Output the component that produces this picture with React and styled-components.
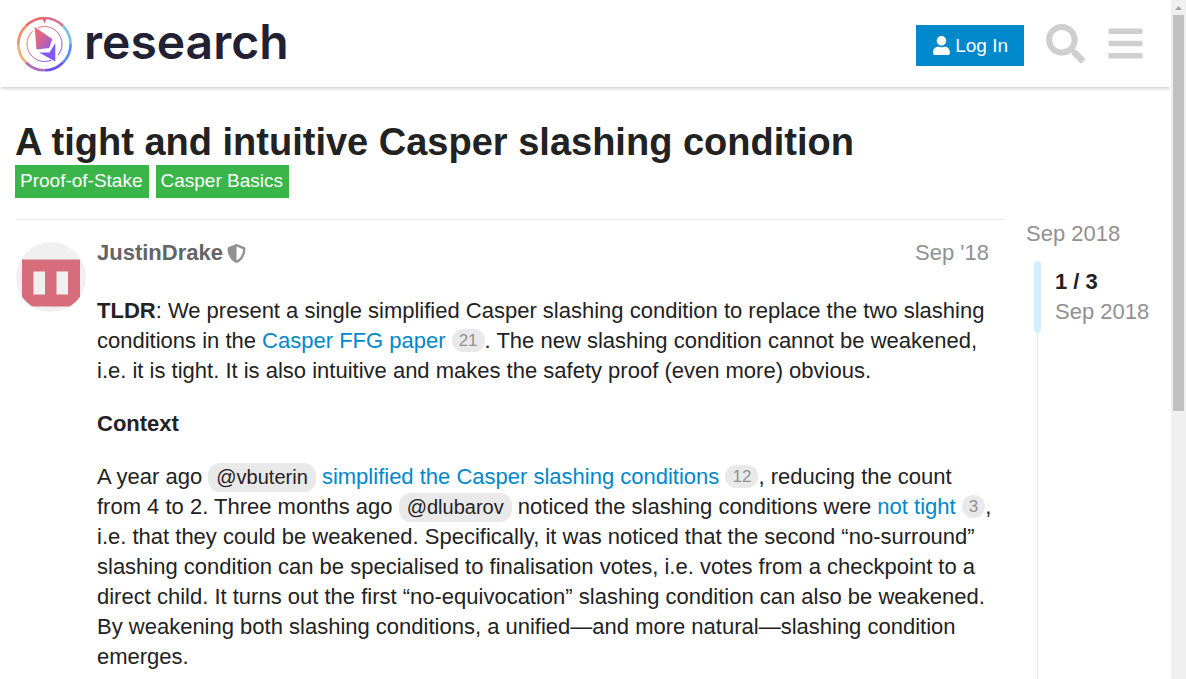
import React from "react";
import styled, { createGlobalStyle } from "styled-components";
import { FaUser, FaSearch, FaBars, FaShieldAlt } from "react-icons/fa";

const GlobalStyle = createGlobalStyle`
  *, *::before, *::after { box-sizing: border-box; }
  body {
    margin: 0;
    background: #fff;
    color: #222;
    font-family: "Liberation Sans", Arial, sans-serif;
    font-size: 22px;
    line-height: 30px;
  }
  a { color: #0088cc; text-decoration: none; }
  button { font-family: inherit; border: 0; cursor: pointer; }
`;

const Frame = styled.div`
  display: grid;
  grid-template-columns: minmax(0, 1fr) 15px;
  height: 100vh;
  overflow: hidden;
`;

const Page = styled.div`
  overflow: hidden;
  display: flex;
  flex-direction: column;
`;

const Track = styled.div`
  display: flex;
  flex-direction: column;
  align-items: center;
  background: #f0f0f0;
`;

const TrackArrow = styled.svg`
  flex: none;
  width: 15px;
  height: 15px;
  fill: #a3a3a3;
`;

const Thumb = styled.div`
  width: 11px;
  height: 396px;
  background: #c0c0c0;
`;

const Header = styled.header`
  flex: none;
  display: flex;
  align-items: center;
  justify-content: space-between;
  height: 87px;
  padding: 0 20px 0 16px;
  background: #fff;
  box-shadow: 0 2px 4px -1px rgba(0, 0, 0, 0.25);
`;

const Brand = styled.a`
  display: flex;
  align-items: flex-start;
  gap: 12px;
  color: #222033;
`;

const Emblem = styled.svg`
  width: 56px;
  height: 56px;
`;

const Wordmark = styled.span`
  font-family: Inter, sans-serif;
  font-size: 48px;
  font-weight: 600;
  line-height: 52px;
`;

const HeaderActions = styled.nav`
  display: flex;
  align-items: center;
`;

const LoginButton = styled.button`
  display: flex;
  align-items: center;
  gap: 4px;
  height: 41px;
  margin: 4px 7px 0 0;
  padding: 0 16px;
  background: #0088cc;
  color: #fff;
  font-size: 19px;
`;

const IconButton = styled.button`
  display: flex;
  padding: 6px;
  margin-left: 9px;
  background: transparent;
  color: #cfcfcf;
  font-size: 39px;
`;

const Main = styled.main`
  flex: 1;
  min-height: 0;
  display: flex;
  flex-direction: column;
  padding: 32px 15px 0;
`;

const Title = styled.h1`
  margin: 0;
  font-size: 38px;
  line-height: 46px;
`;

const Tags = styled.div`
  display: flex;
  gap: 7px;
`;

const Tag = styled.a`
  padding: 0 6px 1px 5px;
  background: #3ab54a;
  color: #fff;
  font-size: 19px;
  line-height: 32px;
`;

const Columns = styled.div`
  flex: 1;
  display: grid;
  grid-template-columns: minmax(0, 1fr) 130px;
  gap: 22px;
  margin-top: 21px;
`;

const Post = styled.article`
  display: grid;
  grid-template-columns: 70px minmax(0, 1fr);
  align-content: start;
  gap: 11px;
  margin-left: 1px;
  padding: 22px 6px 0 0;
  border-top: 1px solid #e9e9e9;
`;

const Avatar = styled.svg`
  width: 70px;
  height: 70px;
`;

const PostMeta = styled.div`
  display: flex;
  align-items: center;
  justify-content: space-between;
  height: 22px;
  padding-right: 9px;
`;

const Author = styled.a`
  display: flex;
  align-items: center;
  gap: 4px;
  color: #646464;
  font-weight: 700;

  svg { color: #919191; font-size: 19px; }
`;

const PostDate = styled.a`
  color: #919191;
`;

const Body = styled.div`
  margin-top: 32px;
  p { margin: 0 0 23px; }
`;

const Clicks = styled.span`
  display: inline-block;
  padding: 0 7px;
  border-radius: 12px;
  background: #e9e9e9;
  color: #919191;
  font-size: 17px;
  line-height: 23px;
  vertical-align: 2px;
`;

const KeepTogether = styled.span`
  white-space: nowrap;
`;

const Mention = styled.a`
  display: inline-block;
  padding: 0 8px;
  border-radius: 12px;
  background: #e9e9e9;
  color: #222;
  font-size: 20px;
  line-height: 29px;
`;

const Timeline = styled.aside`
  display: flex;
  flex-direction: column;
  color: #919191;
`;

const StartDate = styled.a`
  color: #919191;
`;

const Scroller = styled.div`
  display: flex;
  gap: 14px;
  height: 72px;
  margin: 12px 0 0 8px;
`;

const Handle = styled.div`
  flex: none;
  width: 7px;
  border-radius: 4px;
  background: #d1f0ff;
`;

const Position = styled.div`
  padding-top: 6px;
  white-space: nowrap;

  strong { display: block; color: #222; }
`;

const Rail = styled.div`
  flex: 1;
  margin-left: 11px;
  border-left: 1px solid #d1ecf8;
`;

export default function App() {
  return (
    <Frame>
      <GlobalStyle />
      <Page>
        <Header>
          <Brand href="#home">
            <Emblem viewBox="0 0 56 56" aria-hidden="true">
              <defs>
                <linearGradient id="ring" x1="0.1" y1="0.15" x2="0.9" y2="0.85">
                  <stop offset="0" stopColor="#f5785f" />
                  <stop offset="0.35" stopColor="#e27186" />
                  <stop offset="0.7" stopColor="#9a5fe0" />
                  <stop offset="1" stopColor="#6a55f5" />
                </linearGradient>
                <linearGradient id="gem" x1="0" y1="0" x2="1" y2="1">
                  <stop offset="0" stopColor="#f06a6a" />
                  <stop offset="0.5" stopColor="#d0659a" />
                  <stop offset="1" stopColor="#8a58e8" />
                </linearGradient>
              </defs>
              <g fill="none" strokeWidth="2.6">
                <path d="M28.5 2A26 26 0 0 1 47 10" stroke="#d7738b" />
                <path d="M47 10A26 26 0 0 1 54.6 28" stroke="#7bbfe6" />
                <path d="M54.6 28A26 26 0 0 1 47 46.5" stroke="#588bf8" />
                <path d="M47 46.5A26 26 0 0 1 28.5 54.3" stroke="#6a50f2" />
                <path d="M28.5 54.3A26 26 0 0 1 10 46.5" stroke="#ac70c0" />
                <path d="M10 46.5A26 26 0 0 1 2.3 28" stroke="#efae72" />
                <path d="M2.3 28A26 26 0 0 1 10 10" stroke="#f39065" />
                <path d="M10 10A26 26 0 0 1 28.5 2" stroke="#ee6868" />
              </g>
              <path d="M26 2h5l-2.5 5.5z" fill="#e56a77" />
              <circle cx="28.5" cy="28" r="17.5" fill="none" stroke="url(#ring)" strokeWidth="1" />
              <path d="M16 8L38 21.5 42 27V49L34 43 19 34z" fill="#fff" />
              <path d="M18.7 11L36.3 23 33.3 32 20.5 33.5z" fill="url(#gem)" />
              <path d="M39.3 27V45.5L23 36.5 33.5 36.5z" fill="#8359f3" />
            </Emblem>
            <Wordmark>research</Wordmark>
          </Brand>
          <HeaderActions>
            <LoginButton type="button">
              <FaUser aria-hidden="true" />
              Log In
            </LoginButton>
            <IconButton type="button" aria-label="Search"><FaSearch /></IconButton>
            <IconButton type="button" aria-label="Menu"><FaBars /></IconButton>
          </HeaderActions>
        </Header>
        <Main>
          <Title>A tight and intuitive Casper slashing condition</Title>
          <Tags>
            <Tag href="#pos">Proof-of-Stake</Tag>
            <Tag href="#casper">Casper Basics</Tag>
          </Tags>
          <Columns>
            <Post>
              <Avatar viewBox="0 0 70 70" aria-hidden="true">
                <defs>
                  <clipPath id="round"><circle cx="35" cy="35" r="35" /></clipPath>
                </defs>
                <g clipPath="url(#round)">
                  <path fill="#f0f0f0" d="M0 0h70v70H0z" />
                  <path fill="#d76d7b" d="M6 17.5h58v47H6zM17.5 29.5v23h11.5V29.5zM40.5 29.5v23h11.5V29.5z" fillRule="evenodd" />
                </g>
              </Avatar>
              <div>
                <PostMeta>
                  <Author href="#author">JustinDrake <FaShieldAlt aria-hidden="true" /></Author>
                  <PostDate href="#post">Sep '18</PostDate>
                </PostMeta>
                <Body>
                  <p>
                    <strong>TLDR</strong>: We present a single simplified Casper slashing condition to
                    replace the two slashing conditions in the <a href="#ffg">Casper FFG paper</a>{" "}
                    <Clicks>21</Clicks>. The new slashing condition cannot be weakened, i.e. it is
                    tight. It is also intuitive and makes the safety proof (even more) obvious.
                  </p>
                  <p><strong>Context</strong></p>
                  <p>
                    A year ago <Mention href="#vbuterin">@vbuterin</Mention>{" "}
                    <a href="#simplified">simplified the Casper slashing conditions</a>{" "}
                    <KeepTogether><Clicks>12</Clicks>,</KeepTogether> reducing the count from 4 to 2. Three months ago{" "}
                    <Mention href="#dlubarov">@dlubarov</Mention> noticed the slashing conditions
                    were <a href="#tight">not tight</a> <KeepTogether><Clicks>3</Clicks>,</KeepTogether> i.e. that they could be
                    weakened. Specifically, it was noticed that the second “no-surround” slashing
                    condition can be specialised to finalisation votes, i.e. votes from a checkpoint
                    to a direct child. It turns out the first “no-equivocation” slashing condition
                    can also be weakened. By weakening both slashing conditions, a unified—and more
                    natural—slashing condition emerges.
                  </p>
                </Body>
              </div>
            </Post>
            <Timeline>
              <StartDate href="#start">Sep 2018</StartDate>
              <Scroller>
                <Handle />
                <Position>
                  <strong>1 / 3</strong>
                  Sep 2018
                </Position>
              </Scroller>
              <Rail />
            </Timeline>
          </Columns>
        </Main>
      </Page>
      <Track aria-hidden="true">
        <TrackArrow viewBox="0 0 15 15"><path d="M4 10h7L7.5 6z" /></TrackArrow>
        <Thumb />
      </Track>
    </Frame>
  );
}
